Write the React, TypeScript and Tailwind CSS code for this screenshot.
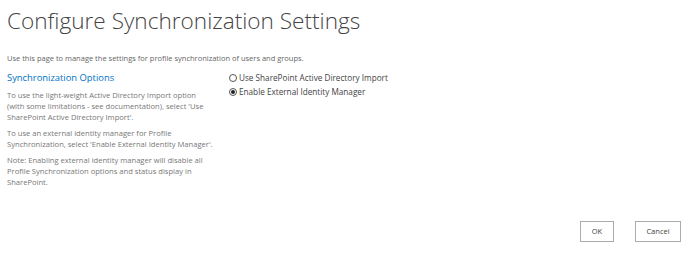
export default function App() {
  return (
    <div className="h-[256px] w-[691px] overflow-hidden bg-white font-['Open_Sans',sans-serif] text-[#444]">
      <div className="px-[7px] pt-[6px]">
        <h1 className="text-[22.6px] font-light leading-[30px] text-[#444]">Configure Synchronization Settings</h1>
        <p className="mt-[17px] text-[7.5px] leading-[10px] text-[#666]">
          Use this page to manage the settings for profile synchronization of users and groups.
        </p>
      </div>

      <div className="mt-[8px] flex px-[7px]">
        <div className="w-[212px]">
          <h2 className="text-[9.4px] leading-[13px] text-[#0072c6]">Synchronization Options</h2>
          <div className="mt-[6px] flex flex-col gap-[5px] text-[7.6px] leading-[11px] text-[#777]">
            <p>
              To use the light-weight Active Directory Import option
              <br />
              (with some limitations - see documentation), select 'Use SharePoint Active Directory Import'.
            </p>
            <p>To use an external identity manager for Profile Synchronization, select 'Enable External Identity Manager'.</p>
            <p>Note: Enabling external identity manager will disable all Profile Synchronization options and status display in SharePoint.</p>
          </div>
        </div>
        <div className="ml-[10px] flex flex-col gap-[3px] pt-[1px] text-[8.2px] leading-[11px] text-[#444]">
          <label className="flex items-center gap-[2px]">
            <span className="h-[8px] w-[8px] rounded-full border border-[#555]" />
            Use SharePoint Active Directory Import
          </label>
          <label className="flex items-center gap-[2px]">
            <span className="flex h-[8px] w-[8px] items-center justify-center rounded-full border border-[#555]">
              <span className="h-[4px] w-[4px] rounded-full bg-[#222]" />
            </span>
            Enable External Identity Manager
          </label>
        </div>
      </div>

      <div className="mt-[33px] flex justify-end gap-[21px] pr-[10px]">
        <button className="h-[21px] w-[34px] border border-[#ababab] bg-white text-[7.5px] text-[#444]">OK</button>
        <button className="h-[21px] w-[46px] border border-[#ababab] bg-white text-[7.5px] text-[#444]">Cancel</button>
      </div>
    </div>
  );
}
